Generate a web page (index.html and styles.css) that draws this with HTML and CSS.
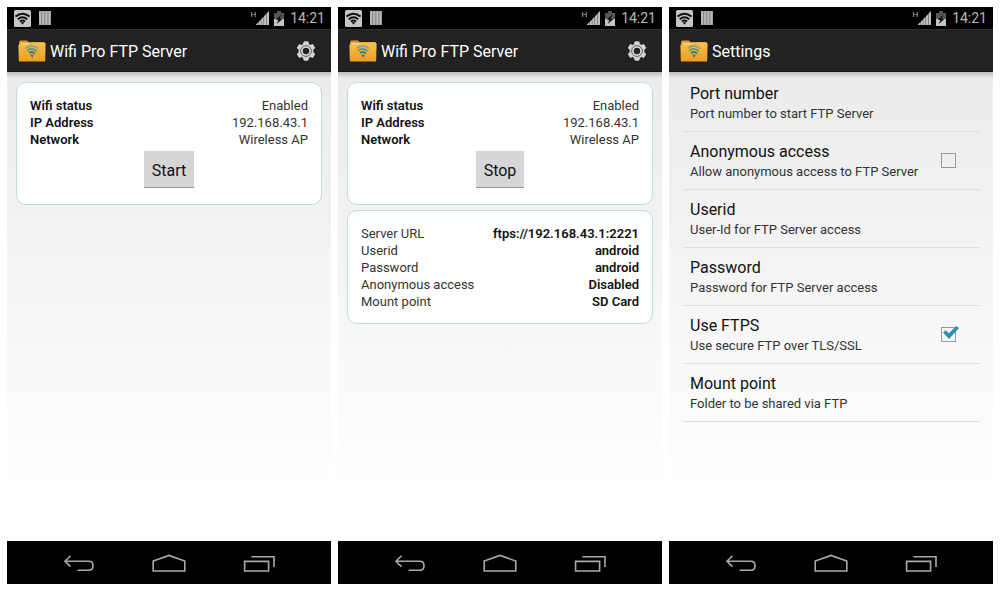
FILE: index.html
```
<!DOCTYPE html>
<html lang="en">
<head>
    <meta charset="UTF-8">
    <meta name="viewport" content="width=device-width, initial-scale=1.0">
    <title>Wifi Pro FTP Server</title>
    <link rel="stylesheet" href="styles.css">
</head>
<body>
    <!-- Shared icons -->
    <svg class="sprite" aria-hidden="true">
        <symbol id="icon-wifi-box" viewBox="0 0 17 17">
            <rect x="0" y="0" width="17" height="17" rx="1.5" fill="#c6c6c6" />
            <g fill="none" stroke="#111" stroke-width="2">
                <path d="M1.4 6.6Q8.5 0.8 15.6 6.6" />
                <path d="M3.7 9.2Q8.5 5.2 13.3 9.2" />
                <path d="M5.9 11.6Q8.5 9.4 11.1 11.6" />
            </g>
            <path d="M6.8 12.6Q8.5 11.4 10.2 12.6L8.5 14.8z" fill="#111" />
        </symbol>
        <symbol id="icon-bars" viewBox="0 0 12 14">
            <path d="M0 0h12v14H0z" fill="#666" />
            <path d="M0 0h2.4v14H0zM3.1 0h2.4v14H3.1zM6.2 0h2.4v14H6.2zM9.3 0h2.4v14H9.3z" fill="#b8b8b8" />
        </symbol>
        <symbol id="icon-signal" viewBox="0 0 13 14">
            <path d="M0 14L13 0V14z" fill="#666" />
            <path d="M0 14V13.4L2 11.4V14zM2.7 14V10.8L4.7 8.8V14zM5.4 14V8L7.4 6V14zM8.1 14V5.2L10.1 3.2V14zM10.8 14V2.4L13 0V14z" fill="#c0c0c0" />
        </symbol>
        <symbol id="icon-battery" viewBox="0 0 10 15">
            <path d="M3 0h4v2h3v6H0V2h3z" fill="#555" />
            <path d="M0 8h10v7H0z" fill="#c4c4c4" />
            <path d="M7.6 3.4L2 8.4l2.4.8L2.6 13l5.6-4.8-2.6-.8z" fill="#111" />
        </symbol>
        <symbol id="icon-folder" viewBox="0 0 28 22">
            <path d="M1 3Q1 .6 2.6 .6H8.6Q9.6 .6 10.2 2H26Q27 2 27 3.2V8H1z" fill="#d99a2b" />
            <path d="M2.6 2.8H25.6V6H2.6z" fill="#f7d58a" />
            <path d="M.4 5.2Q.4 4.4 1.4 4.4H9.8L11.6 3H26.6Q27.6 3 27.6 4L27.2 20.4Q27.2 21.6 26 21.6H2Q.8 21.6.8 20.4z" fill="url(#folder-fill)" />
            <g fill="none" stroke-width="1.8">
                <path d="M7.6 8.2Q14 3.6 20.2 8.6" stroke="#8fa877" />
                <path d="M9.2 10.6Q14 7 18.6 11.2" stroke="#3f9a98" />
                <path d="M11 13Q14 10.8 17 13.6" stroke="#277f8c" />
            </g>
            <path d="M12.4 14.4L15.6 14.8 14.2 18.2z" fill="#4b6c62" />
        </symbol>
        <symbol id="icon-gear" viewBox="0 0 20 20">
            <path d="M8 .8h4l.6 2.5 1.7 1 2.5-.8 2 3.5-1.9 1.8v2.4l1.9 1.8-2 3.5-2.5-.8-1.7 1-.6 2.5H8l-.6-2.5-1.7-1-2.5.8-2-3.5 1.9-1.8V8.8L1.2 7l2-3.5 2.5.8 1.7-1z" fill="#d6d6d6" stroke="#d6d6d6" stroke-width=".8" stroke-linejoin="round" />
            <circle cx="10" cy="10" r="5.4" fill="none" stroke="#444" stroke-width=".8" />
            <circle cx="10" cy="10" r="3.2" fill="#222" />
        </symbol>
        <symbol id="icon-back" viewBox="0 0 32 18">
            <path d="M7.5 1.8L2 7.2l5.5 5.4M2.4 7.2H26Q30 7.2 30 11.7T26 16.2H14.6" />
        </symbol>
        <symbol id="icon-home" viewBox="0 0 34 18">
            <path d="M1.2 17V7L17 1.4 32.8 7V17z" />
        </symbol>
        <symbol id="icon-recent" viewBox="0 0 32 18">
            <path d="M1.6 7.4H25.6V17H1.6zM8.4 2.8H31V13" />
        </symbol>
        <linearGradient id="folder-fill" x1="0" y1="0" x2="0" y2="1">
            <stop offset="0" stop-color="#f9c14c" />
            <stop offset="1" stop-color="#ec9c22" />
        </linearGradient>
    </svg>

    <div class="container">
        <!-- Server stopped -->
        <section class="phone">
            <div class="status-bar">
                <svg class="wifi-box"><use href="#icon-wifi-box" /></svg>
                <svg class="bars"><use href="#icon-bars" /></svg>
                <span class="network-type">H</span>
                <svg class="signal"><use href="#icon-signal" /></svg>
                <svg class="battery"><use href="#icon-battery" /></svg>
                <span class="clock">14:21</span>
            </div>
            <header class="action-bar">
                <svg class="folder"><use href="#icon-folder" /></svg>
                <h1>Wifi Pro FTP Server</h1>
                <button class="gear-btn" type="button" aria-label="Settings"><svg><use href="#icon-gear" /></svg></button>
            </header>
            <main class="content">
                <div class="card">
                    <dl class="info strong-label">
                        <div><dt>Wifi status</dt><dd>Enabled</dd></div>
                        <div><dt>IP Address</dt><dd>192.168.43.1</dd></div>
                        <div><dt>Network</dt><dd>Wireless AP</dd></div>
                    </dl>
                    <button class="btn" type="button">Start</button>
                </div>
            </main>
            <nav class="nav-bar">
                <button type="button" aria-label="Back"><svg><use href="#icon-back" /></svg></button>
                <button type="button" aria-label="Home"><svg><use href="#icon-home" /></svg></button>
                <button type="button" aria-label="Recent apps"><svg><use href="#icon-recent" /></svg></button>
            </nav>
        </section>

        <!-- Server running -->
        <section class="phone">
            <div class="status-bar">
                <svg class="wifi-box"><use href="#icon-wifi-box" /></svg>
                <svg class="bars"><use href="#icon-bars" /></svg>
                <span class="network-type">H</span>
                <svg class="signal"><use href="#icon-signal" /></svg>
                <svg class="battery"><use href="#icon-battery" /></svg>
                <span class="clock">14:21</span>
            </div>
            <header class="action-bar">
                <svg class="folder"><use href="#icon-folder" /></svg>
                <h1>Wifi Pro FTP Server</h1>
                <button class="gear-btn" type="button" aria-label="Settings"><svg><use href="#icon-gear" /></svg></button>
            </header>
            <main class="content">
                <div class="card">
                    <dl class="info strong-label">
                        <div><dt>Wifi status</dt><dd>Enabled</dd></div>
                        <div><dt>IP Address</dt><dd>192.168.43.1</dd></div>
                        <div><dt>Network</dt><dd>Wireless AP</dd></div>
                    </dl>
                    <button class="btn" type="button">Stop</button>
                </div>
                <div class="card">
                    <dl class="info strong-value">
                        <div><dt>Server URL</dt><dd>ftps://192.168.43.1:2221</dd></div>
                        <div><dt>Userid</dt><dd>android</dd></div>
                        <div><dt>Password</dt><dd>android</dd></div>
                        <div><dt>Anonymous access</dt><dd>Disabled</dd></div>
                        <div><dt>Mount point</dt><dd>SD Card</dd></div>
                    </dl>
                </div>
            </main>
            <nav class="nav-bar">
                <button type="button" aria-label="Back"><svg><use href="#icon-back" /></svg></button>
                <button type="button" aria-label="Home"><svg><use href="#icon-home" /></svg></button>
                <button type="button" aria-label="Recent apps"><svg><use href="#icon-recent" /></svg></button>
            </nav>
        </section>

        <!-- Settings -->
        <section class="phone">
            <div class="status-bar">
                <svg class="wifi-box"><use href="#icon-wifi-box" /></svg>
                <svg class="bars"><use href="#icon-bars" /></svg>
                <span class="network-type">H</span>
                <svg class="signal"><use href="#icon-signal" /></svg>
                <svg class="battery"><use href="#icon-battery" /></svg>
                <span class="clock">14:21</span>
            </div>
            <header class="action-bar">
                <svg class="folder"><use href="#icon-folder" /></svg>
                <h1>Settings</h1>
            </header>
            <main class="content settings">
                <button class="setting" type="button">
                    <span class="text"><span class="name">Port number</span><span class="hint">Port number to start FTP Server</span></span>
                </button>
                <label class="setting" for="anonymous">
                    <span class="text"><span class="name">Anonymous access</span><span class="hint">Allow anonymous access to FTP Server</span></span>
                    <input type="checkbox" id="anonymous">
                </label>
                <button class="setting" type="button">
                    <span class="text"><span class="name">Userid</span><span class="hint">User-Id for FTP Server access</span></span>
                </button>
                <button class="setting" type="button">
                    <span class="text"><span class="name">Password</span><span class="hint">Password for FTP Server access</span></span>
                </button>
                <label class="setting" for="ftps">
                    <span class="text"><span class="name">Use FTPS</span><span class="hint">Use secure FTP over TLS/SSL</span></span>
                    <input type="checkbox" id="ftps" checked>
                </label>
                <button class="setting" type="button">
                    <span class="text"><span class="name">Mount point</span><span class="hint">Folder to be shared via FTP</span></span>
                </button>
            </main>
            <nav class="nav-bar">
                <button type="button" aria-label="Back"><svg><use href="#icon-back" /></svg></button>
                <button type="button" aria-label="Home"><svg><use href="#icon-home" /></svg></button>
                <button type="button" aria-label="Recent apps"><svg><use href="#icon-recent" /></svg></button>
            </nav>
        </section>
    </div>
</body>
</html>
```
FILE: styles.css
```
/* Reset some default styles */
* {
    margin: 0;
    padding: 0;
    box-sizing: border-box;
}

body {
    font-family: Roboto, sans-serif;
    font-size: 13px;
    background-color: #fff;
    color: #333;
}

button {
    font-family: inherit;
    color: inherit;
    background: none;
    border: none;
    cursor: pointer;
}

svg {
    display: block;
}

.sprite {
    position: absolute;
    width: 0;
    height: 0;
}

.container {
    display: flex;
    gap: 7px;
    min-height: 100vh;
    padding: 7px;
}

.phone {
    flex: 1;
    min-width: 0;
    display: flex;
    flex-direction: column;
}

/* Status bar */
.status-bar {
    display: flex;
    align-items: center;
    height: 22px;
    padding: 0 6px 0 7px;
    background-color: #000;
    color: #b8b8b8;
}

    .status-bar .wifi-box {
        width: 17px;
        height: 17px;
    }

    .status-bar .bars {
        width: 12px;
        height: 14px;
        margin-left: 8px;
    }

    .status-bar .network-type {
        margin-left: auto;
        align-self: flex-start;
        padding-top: 4px;
        font-size: 8px;
        line-height: 8px;
    }

    .status-bar .signal {
        width: 13px;
        height: 14px;
    }

    .status-bar .battery {
        width: 10px;
        height: 15px;
        margin: 0 6px 0 5px;
    }

    .status-bar .clock {
        font-size: 14px;
        line-height: 22px;
    }

/* Action bar */
.action-bar {
    display: flex;
    align-items: center;
    height: 43px;
    padding: 1px 15px 0 11px;
    background-color: #222;
    border-top: 1px solid #303030;
    border-bottom: 1px solid #111;
    color: #fff;
}

    .action-bar .folder {
        width: 28px;
        height: 22px;
    }

    .action-bar h1 {
        margin-left: 4px;
        padding-top: 1px;
        font-size: 16px;
        font-weight: normal;
    }

    .action-bar .gear-btn {
        margin-left: auto;
    }

        .action-bar .gear-btn svg {
            width: 20px;
            height: 20px;
        }

/* Content */
.content {
    flex: 1;
    display: flex;
    flex-direction: column;
    gap: 5px;
    padding: 10px 9px;
    background: linear-gradient(rgba(0, 0, 0, 0.2), rgba(0, 0, 0, 0) 6px), linear-gradient(#ebebeb, #fff 90%);
}

.card {
    padding: 14px 13px 13px;
    background-color: #fff;
    border: 1px solid #c5d9e0;
    border-radius: 10px;
}

    .card .info div {
        display: flex;
        justify-content: space-between;
        line-height: 17px;
    }

    .card .strong-label dt,
    .card .strong-value dd {
        font-weight: 600;
        color: #111;
    }

    .card .btn {
        display: block;
        height: 37px;
        margin: 3px auto;
        padding: 2px 8px 0;
        background-color: #d6d6d6;
        border-bottom: 1px solid #999;
        font-size: 16px;
        color: #111;
    }

/* Settings list */
.settings {
    gap: 0;
    padding: 2px 13px 2px 14px;
}

.setting {
    display: flex;
    align-items: center;
    justify-content: space-between;
    min-height: 58px;
    padding: 0 24px 0 7px;
    border-bottom: 1px solid #dedede;
    text-align: left;
    cursor: pointer;
}

    .setting .name {
        display: block;
        font-size: 16px;
        line-height: 22px;
        color: #111;
    }

    .setting .hint {
        display: block;
        font-size: 13px;
        line-height: 17px;
    }

    .setting input {
        position: relative;
        appearance: none;
        width: 15px;
        height: 15px;
        border: 1px solid #999;
        cursor: pointer;
    }

        /* Tick reaches past the top right corner of the box */
        .setting input:checked::after {
            content: "";
            position: absolute;
            top: -2px;
            left: 1px;
            width: 16px;
            height: 13px;
            background-color: #2a90b5;
            clip-path: polygon(0 50%, 17% 32%, 37% 56%, 83% 0, 100% 16%, 38% 100%);
        }

/* Navigation bar */
.nav-bar {
    display: flex;
    justify-content: center;
    height: 43px;
    background-color: #000;
}

    .nav-bar button {
        display: flex;
        align-items: center;
        justify-content: center;
        width: 90px;
    }

    .nav-bar svg {
        width: 34px;
        height: 18px;
        fill: none;
        stroke: #aaa;
        stroke-width: 1.6;
    }
```
